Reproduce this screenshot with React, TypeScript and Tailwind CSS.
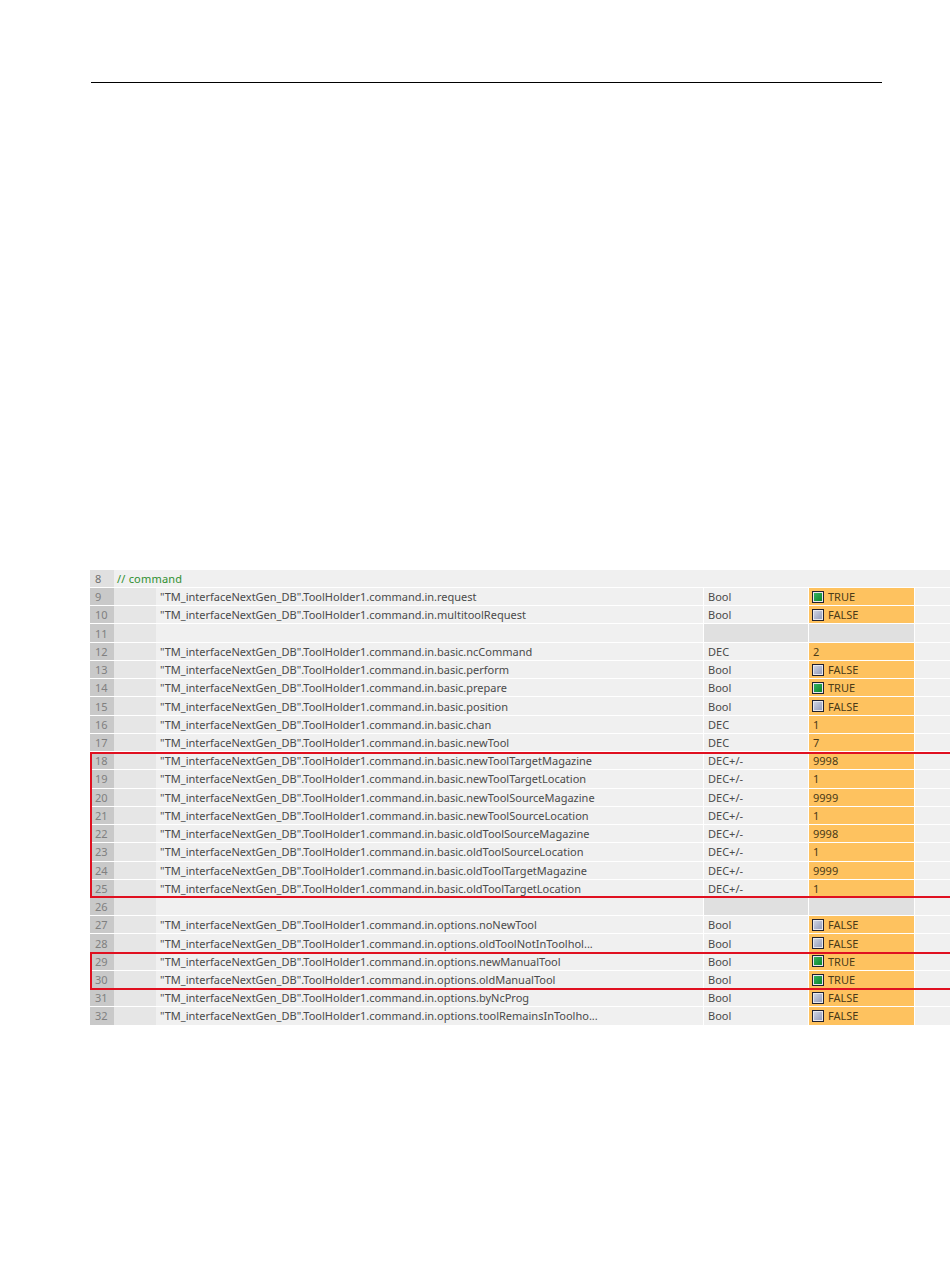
const P = '"TM_interfaceNextGen_DB".ToolHolder1.command.in.';

type R = { n: number; name?: string; type?: string; value?: string; comment?: string };

const rows: R[] = [
  { n: 8, comment: "// command" },
  { n: 9, name: "request", type: "Bool", value: "TRUE" },
  { n: 10, name: "multitoolRequest", type: "Bool", value: "FALSE" },
  { n: 11 },
  { n: 12, name: "basic.ncCommand", type: "DEC", value: "2" },
  { n: 13, name: "basic.perform", type: "Bool", value: "FALSE" },
  { n: 14, name: "basic.prepare", type: "Bool", value: "TRUE" },
  { n: 15, name: "basic.position", type: "Bool", value: "FALSE" },
  { n: 16, name: "basic.chan", type: "DEC", value: "1" },
  { n: 17, name: "basic.newTool", type: "DEC", value: "7" },
  { n: 18, name: "basic.newToolTargetMagazine", type: "DEC+/-", value: "9998" },
  { n: 19, name: "basic.newToolTargetLocation", type: "DEC+/-", value: "1" },
  { n: 20, name: "basic.newToolSourceMagazine", type: "DEC+/-", value: "9999" },
  { n: 21, name: "basic.newToolSourceLocation", type: "DEC+/-", value: "1" },
  { n: 22, name: "basic.oldToolSourceMagazine", type: "DEC+/-", value: "9998" },
  { n: 23, name: "basic.oldToolSourceLocation", type: "DEC+/-", value: "1" },
  { n: 24, name: "basic.oldToolTargetMagazine", type: "DEC+/-", value: "9999" },
  { n: 25, name: "basic.oldToolTargetLocation", type: "DEC+/-", value: "1" },
  { n: 26 },
  { n: 27, name: "options.noNewTool", type: "Bool", value: "FALSE" },
  { n: 28, name: "options.oldToolNotInToolhol...", type: "Bool", value: "FALSE" },
  { n: 29, name: "options.newManualTool", type: "Bool", value: "TRUE" },
  { n: 30, name: "options.oldManualTool", type: "Bool", value: "TRUE" },
  { n: 31, name: "options.byNcProg", type: "Bool", value: "FALSE" },
  { n: 32, name: "options.toolRemainsInToolho...", type: "Bool", value: "FALSE" },
];

function Flag({ on }: { on: boolean }) {
  return (
    <span className="w-[12px] h-[12px] shrink-0 -ml-[1px] border border-[#20202e] bg-[#e8e8ee] p-px flex">
      <span
        className={
          "flex-1 " +
          (on
            ? "bg-gradient-to-br from-[#35b060] to-[#07882a]"
            : "bg-gradient-to-br from-[#cdd2e0] to-[#959dbb]")
        }
      />
    </span>
  );
}

function Row({ r }: { r: R }) {
  if (r.comment) {
    return (
      <div className="flex h-[18.24px] border-b border-white">
        <div className="w-[24px] shrink-0 bg-[#e0e0e0] pl-[5px] text-[#707070] flex items-center">{r.n}</div>
        <div className="flex-1 bg-[#f0f0f0] pl-[3px] text-[#2f8f2f] tracking-[0.2px] flex items-center">{r.comment}</div>
      </div>
    );
  }
  const blank = !r.name;
  const bool = r.value === "TRUE" || r.value === "FALSE";
  return (
    <div className="flex h-[18.24px] border-b border-white">
      <div className="w-[24px] shrink-0 bg-[#c9c9c9] pl-[5px] text-[#808080] flex items-center">{r.n}</div>
      <div className="w-[42px] shrink-0 bg-[#e6e6e6]" />
      <div className="w-[547px] shrink-0 bg-[#f0f0f0] pl-[4px] flex items-center whitespace-nowrap">
        {r.name ? P + r.name : ""}
      </div>
      <div className={"w-[104px] shrink-0 ml-[1px] pl-[4px] flex items-center " + (blank ? "bg-[#e0e0e0]" : "bg-[#f0f0f0]")}>
        {r.type}
      </div>
      <div
        className={
          "w-[105px] shrink-0 ml-[1px] pl-[4px] flex items-center gap-[4px] " +
          (blank ? "bg-[#e0e0e0]" : "bg-[#fec25f] text-[#4a3a18]")
        }
      >
        {bool && <Flag on={r.value === "TRUE"} />}
        {r.value}
      </div>
      <div className="flex-1 ml-[1px] bg-[#f0f0f0]" />
    </div>
  );
}

export default function App() {
  return (
    <div className="relative w-[950px] h-[1267px] overflow-hidden bg-white pt-[82px]">
      <div className="ml-[91px] w-[791px] h-px bg-black" />
      <div
        className="mt-[486.76px] ml-[90px] text-[11px] leading-none tracking-[0px] text-[#4a4a4a]"
        style={{ fontFamily: '"Noto Sans", sans-serif' }}
      >
        {rows.map((r) => (
          <Row key={r.n} r={r} />
        ))}
      </div>
      <div className="absolute left-[90px] top-[752px] w-[870px] h-[146px] border-2 border-[#e01020]" />
      <div className="absolute left-[90px] top-[952px] w-[870px] h-[38px] border-2 border-[#e01020]" />
    </div>
  );
}
